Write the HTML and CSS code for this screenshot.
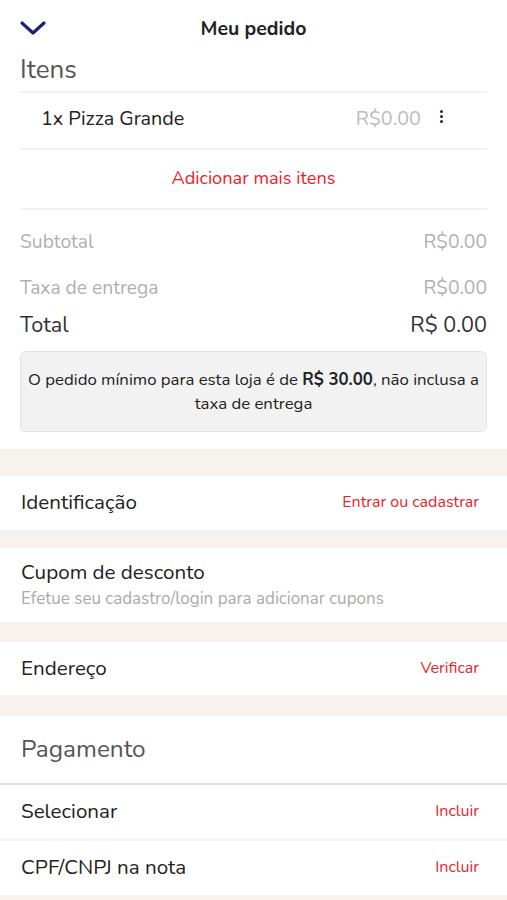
FILE: index.html
```html
<!DOCTYPE html>
<html>
<head>
	<title>Meu pedido</title>
	<meta charset="UTF-8">
	<link rel="stylesheet" href="styles.css">
</head>
<body>

<header class="topbar">
	<svg class="back" width="28" height="16" viewBox="0 0 28 16"><path d="M3 3 L14 13 L25 3" fill="none" stroke="#1a2170" stroke-width="3.2" stroke-linecap="round" stroke-linejoin="round"/></svg>
	<h1>Meu pedido</h1>
</header>

<section class="card">
	<h2 class="section-title">Itens</h2>
	<div class="item">
		<span class="item-name">1x Pizza Grande</span>
		<span class="item-price">R$0.00</span>
		<span class="more"><i></i><i></i><i></i></span>
	</div>
	<div class="add-more">Adicionar mais itens</div>

	<div class="totals">
		<div class="line muted"><span>Subtotal</span><span>R$0.00</span></div>
		<div class="line muted"><span>Taxa de entrega</span><span>R$0.00</span></div>
		<div class="line total"><span>Total</span><span>R$ 0.00</span></div>
	</div>

	<div class="notice">O pedido mínimo para esta loja é de <b>R$ 30.00</b>, não inclusa a taxa de entrega</div>
</section>

<div class="gap tall"></div>
<div class="row">
	<span>Identificação</span>
	<a>Entrar ou cadastrar</a>
</div>
<div class="gap"></div>
<div class="row coupon">
	<div>
		<div>Cupom de desconto</div>
		<div class="hint">Efetue seu cadastro/login para adicionar cupons</div>
	</div>
</div>
<div class="gap wide"></div>
<div class="row short">
	<span>Endereço</span>
	<a>Verificar</a>
</div>
<div class="gap wider"></div>
<div class="pay-title">Pagamento</div>
<div class="row bordered">
	<span>Selecionar</span>
	<a>Incluir</a>
</div>
<div class="row">
	<span>CPF/CNPJ na nota</span>
	<a>Incluir</a>
</div>
<div class="gap"></div>

</body>
</html>
```

FILE: styles.css
```css
html
{
	background:white;
}
body
{
	margin:0;
	font-family:"Nunito", "Lato", "Noto Sans", sans-serif;
	color:#222;
}
.topbar
{
	position:relative;
	height:56px;
	display:flex;
	align-items:center;
	justify-content:center;
}
.back
{
	position:absolute;
	left:19px;
	top:20px;
}
h1
{
	font-size:19.5px;
	font-weight:700;
	margin:0;
}
.card
{
	padding:0 20px 17px 20px;
}
.section-title
{
	font-size:26px;
	font-weight:400;
	color:#555;
	margin:0;
	height:35px;
	line-height:28px;
}
.item
{
	display:flex;
	align-items:center;
	height:51px;
	padding:0 44px 4px 21px;
	border-top:2px solid #f2f2f2;
	border-bottom:2px solid #f2f2f2;
	font-size:19.8px;
}
.item-name { flex:1; }
.item-price
{
	color:#bbb;
	margin-right:19px;
}
.more
{
	display:flex;
	flex-direction:column;
	gap:2px;
	margin-top:-5px;
}
.more i
{
	display:block;
	width:3px;
	height:3px;
	border-radius:50%;
	background:#1a2170;
}
.add-more
{
	text-align:center;
	color:#ee1d27;
	font-size:18.2px;
	height:58px;
	line-height:56px;
	border-bottom:2px solid #f2f2f2;
}
.totals
{
	padding-top:14px;
}
.line
{
	display:flex;
	justify-content:space-between;
	font-size:19.3px;
}
.muted
{
	color:#b0b0b0;
	height:46px;
	line-height:36px;
}
.total
{
	color:#333;
	font-size:21.6px;
	height:28px;
	line-height:18px;
}
.notice
{
	margin-top:7px;
	background:#f2f2f2;
	border:1px solid #e2e2e2;
	border-radius:6px;
	padding:16px 2px 15px 2px;
	text-align:center;
	font-size:16.8px;
	line-height:24px;
	color:#222;
}
.notice b { font-weight:700; }
.gap
{
	height:18px;
	background:#f7f2ee;
}
.gap.tall { height:27px; }
.gap.wide { height:20px; }
.gap.wider { height:21px; }
.row
{
	display:flex;
	align-items:center;
	justify-content:space-between;
	height:52px;
	padding:0 28px 2px 21px;
	font-size:20.6px;
}
.row.short { height:51px; }
.row a
{
	color:#ee1d27;
	font-size:16px;
}
.coupon
{
	height:74px;
	padding-bottom:0;
	line-height:28px;
}
.hint
{
	font-size:17px;
	color:#aaa;
	line-height:26px;
}
.pay-title
{
	font-size:24.4px;
	color:#555;
	height:67px;
	line-height:66px;
	padding-left:21px;
	border-bottom:2px solid #e2e2e2;
}
.bordered
{
	height:51px;
	border-bottom:3px solid #f5f5f5;
}
```
